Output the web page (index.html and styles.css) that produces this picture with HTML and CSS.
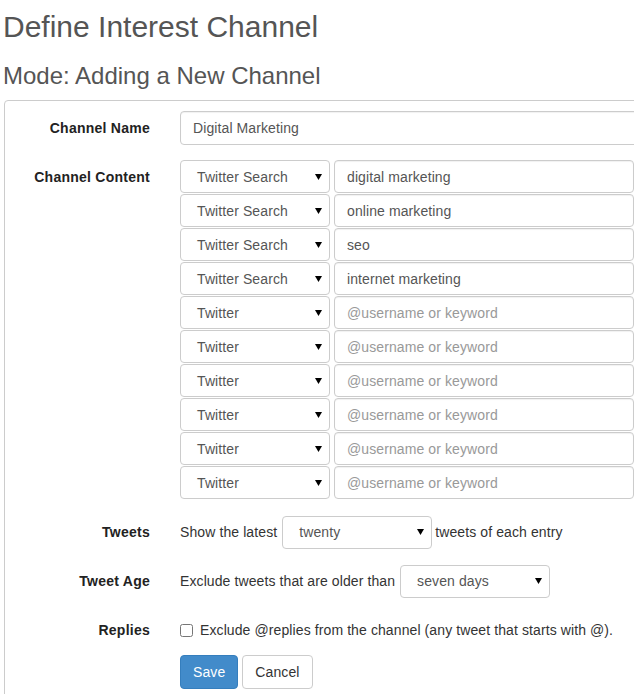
FILE: index.html
```html
<!DOCTYPE html>
<html>
<head>
<meta charset="utf-8">
<link rel="stylesheet" href="styles.css">
</head>
<body>
<div class="page">
  <h1 class="title">Define Interest Channel</h1>
  <h2 class="subtitle">Mode: Adding a New Channel</h2>
  <div class="panel">
    <div class="form-row">
      <div class="label">Channel Name</div>
      <div class="controls">
        <input class="field name-field" type="text" value="Digital Marketing">
      </div>
    </div>
    <div class="form-row">
      <div class="label">Channel Content</div>
      <div class="controls">
        <div class="entry"><div class="select"><span>Twitter Search</span><svg class="arrow" width="7" height="6" viewBox="0 0 7 6"><path d="M0 0H7L3.5 6Z"/></svg></div><input class="field entry-field" type="text" value="digital marketing"></div>
        <div class="entry"><div class="select"><span>Twitter Search</span><svg class="arrow" width="7" height="6" viewBox="0 0 7 6"><path d="M0 0H7L3.5 6Z"/></svg></div><input class="field entry-field" type="text" value="online marketing"></div>
        <div class="entry"><div class="select"><span>Twitter Search</span><svg class="arrow" width="7" height="6" viewBox="0 0 7 6"><path d="M0 0H7L3.5 6Z"/></svg></div><input class="field entry-field" type="text" value="seo"></div>
        <div class="entry"><div class="select"><span>Twitter Search</span><svg class="arrow" width="7" height="6" viewBox="0 0 7 6"><path d="M0 0H7L3.5 6Z"/></svg></div><input class="field entry-field" type="text" value="internet marketing"></div>
        <div class="entry"><div class="select"><span>Twitter</span><svg class="arrow" width="7" height="6" viewBox="0 0 7 6"><path d="M0 0H7L3.5 6Z"/></svg></div><input class="field entry-field" type="text" placeholder="@username or keyword"></div>
        <div class="entry"><div class="select"><span>Twitter</span><svg class="arrow" width="7" height="6" viewBox="0 0 7 6"><path d="M0 0H7L3.5 6Z"/></svg></div><input class="field entry-field" type="text" placeholder="@username or keyword"></div>
        <div class="entry"><div class="select"><span>Twitter</span><svg class="arrow" width="7" height="6" viewBox="0 0 7 6"><path d="M0 0H7L3.5 6Z"/></svg></div><input class="field entry-field" type="text" placeholder="@username or keyword"></div>
        <div class="entry"><div class="select"><span>Twitter</span><svg class="arrow" width="7" height="6" viewBox="0 0 7 6"><path d="M0 0H7L3.5 6Z"/></svg></div><input class="field entry-field" type="text" placeholder="@username or keyword"></div>
        <div class="entry"><div class="select"><span>Twitter</span><svg class="arrow" width="7" height="6" viewBox="0 0 7 6"><path d="M0 0H7L3.5 6Z"/></svg></div><input class="field entry-field" type="text" placeholder="@username or keyword"></div>
        <div class="entry"><div class="select"><span>Twitter</span><svg class="arrow" width="7" height="6" viewBox="0 0 7 6"><path d="M0 0H7L3.5 6Z"/></svg></div><input class="field entry-field" type="text" placeholder="@username or keyword"></div>
      </div>
    </div>
    <div class="form-row">
      <div class="label">Tweets</div>
      <div class="controls inline">
        <span>Show the latest</span>
        <div class="select select-tweets"><span>twenty</span><svg class="arrow" width="7" height="6" viewBox="0 0 7 6"><path d="M0 0H7L3.5 6Z"/></svg></div>
        <span>tweets of each entry</span>
      </div>
    </div>
    <div class="form-row">
      <div class="label">Tweet Age</div>
      <div class="controls inline">
        <span>Exclude tweets that are older than</span>
        <div class="select select-age"><span>seven days</span><svg class="arrow" width="7" height="6" viewBox="0 0 7 6"><path d="M0 0H7L3.5 6Z"/></svg></div>
      </div>
    </div>
    <div class="form-row">
      <div class="label">Replies</div>
      <div class="controls inline check-row">
        <input class="check" type="checkbox">
        <span>Exclude @replies from the channel (any tweet that starts with @).</span>
      </div>
    </div>
    <div class="form-row actions-row">
      <div class="label"></div>
      <div class="controls actions">
        <button class="btn btn-primary">Save</button>
        <button class="btn btn-default">Cancel</button>
      </div>
    </div>
  </div>
</div>
</body>
</html>
```

FILE: styles.css
```css
html, body {
  margin: 0;
  padding: 0;
  overflow: hidden;
  background: #fff;
}
body {
  font-family: "Liberation Sans", Arial, sans-serif;
  font-size: 14px;
  line-height: 20px;
  color: #333;
  letter-spacing: 0.1px;
}
.page {
  padding-left: 3px;
}
.title {
  margin: 10px 0 0;
  font-size: 30px;
  line-height: 33px;
  font-weight: normal;
  color: #555;
  letter-spacing: 0;
}
.subtitle {
  margin: 20px 0 11px;
  font-size: 24px;
  line-height: 26px;
  font-weight: normal;
  color: #555;
  letter-spacing: 0;
}
.panel {
  margin-left: 1px;
  width: 760px;
  border: 1px solid #ccc;
  border-radius: 4px;
  padding: 10px 0 40px;
}
.form-row {
  display: flex;
  margin-bottom: 15px;
}
.label {
  width: 145px;
  flex: none;
  text-align: right;
  font-weight: bold;
  color: #222;
  padding-top: 7px;
  line-height: 20px;
  letter-spacing: 0.25px;
}
.controls {
  margin-left: 30px;
  flex: 1;
}
.field {
  box-sizing: border-box;
  height: 33px;
  border: 1px solid #ccc;
  border-radius: 4px;
  padding: 6px 12px;
  font-family: "Liberation Sans", Arial, sans-serif;
  font-size: 14px;
  letter-spacing: 0.1px;
  color: #555;
  background: #fff;
  box-shadow: inset 0 1px 1px rgba(0,0,0,0.06);
  outline: none;
  margin: 0;
  display: block;
}
.field::placeholder {
  color: #999;
}
.name-field {
  height: 34px;
  width: 500px;
}
.entry {
  display: flex;
  gap: 4px;
  margin-bottom: 1px;
}
.entry-field {
  width: 300px;
}
.select {
  box-sizing: border-box;
  width: 150px;
  height: 33px;
  border: 1px solid #ccc;
  border-radius: 4px;
  background: #fff;
  display: flex;
  align-items: center;
  justify-content: space-between;
  padding: 0 7px 0 16px;
  color: #555;
  flex: none;
}
.arrow {
  display: block;
  fill: #000;
}
.inline {
  display: flex;
  align-items: center;
  height: 34px;
}
.select-tweets {
  margin: 0 3px 0 5px;
}
.select-age {
  margin-left: 5px;
}
.check-row {
  gap: 7px;
}
.check {
  margin: 0;
  width: 13px;
  height: 13px;
}
.actions-row {
  margin-top: -7px;
}
.actions {
  display: flex;
  gap: 4px;
}
.btn {
  box-sizing: border-box;
  height: 34px;
  padding: 6px 12px;
  font-family: "Liberation Sans", Arial, sans-serif;
  font-size: 14px;
  line-height: 20px;
  letter-spacing: 0.1px;
  border-radius: 4px;
  border: 1px solid #ccc;
  background: #fff;
  color: #333;
}
.btn-primary {
  background: #428bca;
  border-color: #357ebd;
  color: #fff;
}
```
